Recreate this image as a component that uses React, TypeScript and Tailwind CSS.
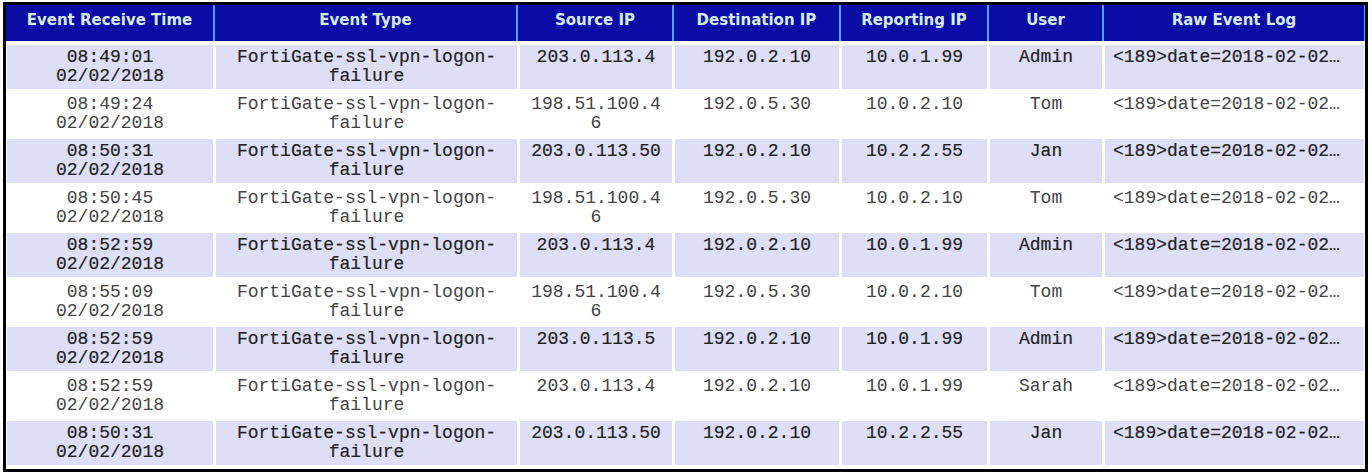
import React from "react";

const rows = [
  ["08:49:01", "203.0.113.4", "192.0.2.10", "10.0.1.99", "Admin"],
  ["08:49:24", "198.51.100.46", "192.0.5.30", "10.0.2.10", "Tom"],
  ["08:50:31", "203.0.113.50", "192.0.2.10", "10.2.2.55", "Jan"],
  ["08:50:45", "198.51.100.46", "192.0.5.30", "10.0.2.10", "Tom"],
  ["08:52:59", "203.0.113.4", "192.0.2.10", "10.0.1.99", "Admin"],
  ["08:55:09", "198.51.100.46", "192.0.5.30", "10.0.2.10", "Tom"],
  ["08:52:59", "203.0.113.5", "192.0.2.10", "10.0.1.99", "Admin"],
  ["08:52:59", "203.0.113.4", "192.0.2.10", "10.0.1.99", "Sarah"],
  ["08:50:31", "203.0.113.50", "192.0.2.10", "10.2.2.55", "Jan"],
];

const headers = [
  "Event Receive Time",
  "Event Type",
  "Source IP",
  "Destination IP",
  "Reporting IP",
  "User",
  "Raw Event Log",
];

export default function App() {
  return (
    <div className="w-[1372px] h-[473px] bg-white pt-[2px] pl-[3px]">
      <div className="w-[1365px] border-[3px] border-black bg-white pb-[4px]">
        <div
          className="grid grid-cols-[207px_301px_154px_165px_146px_113px_260px] gap-x-[2px] bg-[#4ea3f5] h-[36px]"
          style={{ fontFamily: '"DejaVu Sans", Verdana, sans-serif' }}
        >
          {headers.map((h) => (
            <div
              key={h}
              className="bg-[#0b0ba6] text-[#d6ebff] font-bold text-[15px] flex items-start justify-center pt-[4px]"
            >
              {h}
            </div>
          ))}
        </div>
        <div
          className="flex flex-col gap-y-[3px] pt-[4px] pl-[1px]"
          style={{ fontFamily: '"Liberation Mono", "Courier New", monospace' }}
        >
          {rows.map((r, i) => {
            const shaded = i % 2 === 0;
            const cell = shaded
              ? "bg-[#dedff7] text-[#222222] [-webkit-text-stroke:0.2px_#222222]"
              : "bg-white text-[#444444]";
            return (
              <div
                key={i}
                className="grid grid-cols-[206px_301px_152px_164px_145px_112px_259px] gap-x-[3px] h-[44px] text-[18px] leading-[19px]"
              >
                <div className={`${cell} text-center pt-[3px]`}>
                  {r[0]}
                  <br />
                  02/02/2018
                </div>
                <div className={`${cell} text-center pt-[3px] px-[20px]`}>
                  FortiGate-ssl-vpn-logon-failure
                </div>
                <div className={`${cell} text-center pt-[3px] px-[8px] break-all`}>
                  {r[1]}
                </div>
                <div className={`${cell} text-center pt-[3px]`}>{r[2]}</div>
                <div className={`${cell} text-center pt-[3px]`}>{r[3]}</div>
                <div className={`${cell} text-center pt-[3px]`}>{r[4]}</div>
                <div className={`${cell} text-left pt-[3px] pl-[8px] whitespace-nowrap overflow-hidden`}>
                  {"<189>date=2018-02-02…"}
                </div>
              </div>
            );
          })}
        </div>
      </div>
    </div>
  );
}
